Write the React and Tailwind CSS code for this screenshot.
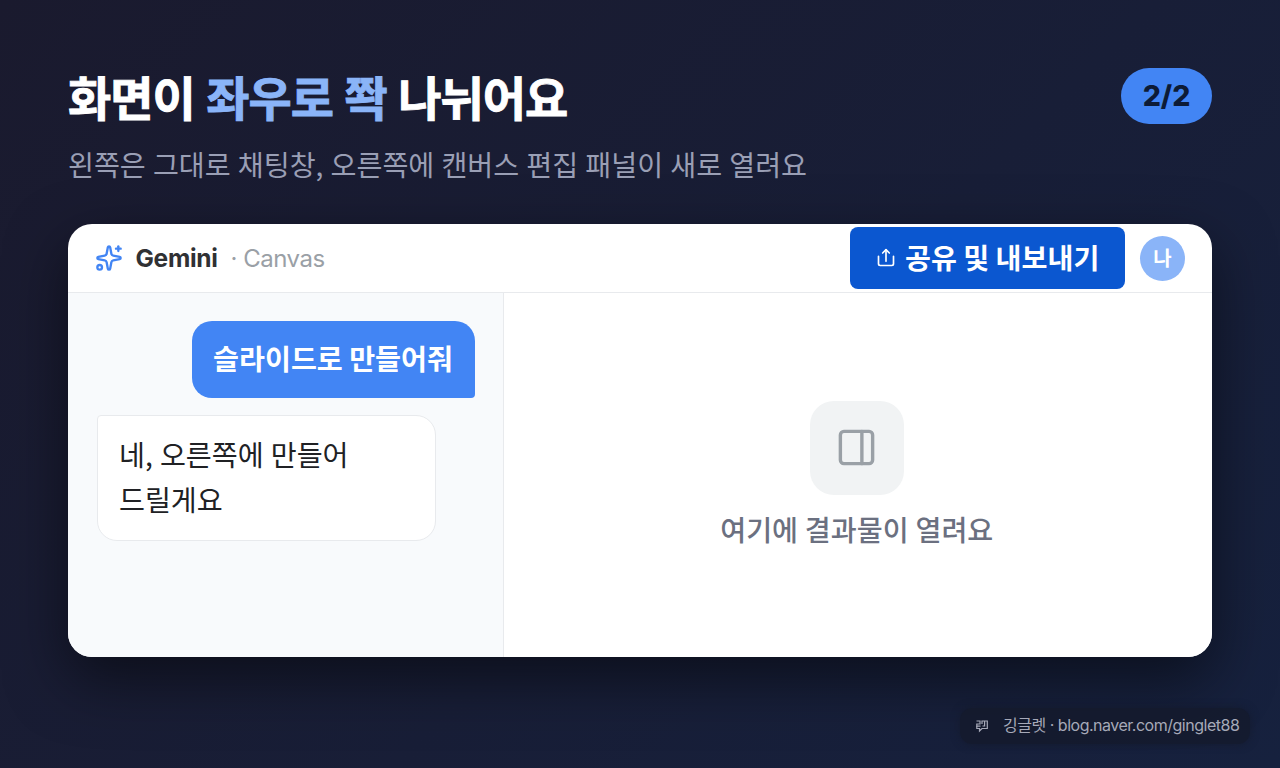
import React from 'react';
import { PanelRight, Sparkles } from 'lucide-react';

function ShareIcon() {
  return (
    <svg className="h-[20px] w-[20px]" viewBox="0 0 24 24" fill="none" stroke="currentColor" strokeWidth="2" strokeLinecap="round" strokeLinejoin="round">
      <path d="M12 2.2V16" />
      <path d="m16 6-4-4-4 4" />
      <path d="M3 10v9a2 2 0 0 0 2 2h14a2 2 0 0 0 2-2v-9" />
    </svg>
  );
}

function BlogMark() {
  return (
    <svg className="h-3.5 w-3.5" viewBox="0 0 14 14" fill="none" stroke="currentColor" strokeWidth="1.2">
      <path d="M7 5V2h5.3v7.5H7L4.5 12V9.5H1.8V7" />
      <path d="M1.5 2H5v3H1.8v2.2H5.5M9.6 2v5H7.5" />
    </svg>
  );
}

function Header() {
  return (
    <div className="flex h-[69px] shrink-0 items-center border-b border-[#e8eaed] pr-[26.5px] pl-[27px]">
      <Sparkles size={28} strokeWidth={2} className="mr-[12.5px] text-[#4285f4]" />
      <span className="pt-px text-[24.5px] font-bold tracking-[-0.3px] text-[#303134]">Gemini</span>
      <span className="ml-[13px] pt-px text-[24px] tracking-[-0.5px] text-[#9aa0a6]">· Canvas</span>
      <div className="ml-auto flex h-[62px] w-[275px] items-center gap-[9px] rounded-lg bg-[#0b57d0] pl-[26px] text-white">
        <ShareIcon />
        <span className="-mt-0.5 whitespace-nowrap font-['Noto_Sans_CJK_KR',sans-serif] text-[28.2px] font-bold">공유 및 내보내기</span>
      </div>
      <div className="ml-[15px] flex h-[45px] w-[45px] items-center justify-center rounded-full bg-[#8ab4f8] font-['Noto_Sans_CJK_KR',sans-serif] text-[20px] font-bold text-white">
        나
      </div>
    </div>
  );
}

function ChatPane() {
  return (
    <div className="flex w-[436px] shrink-0 flex-col gap-[17px] border-r border-[#e8eaed] bg-[#f8fafc] pt-7 pr-7 pl-[29px] text-[28.2px]">
      <div className="flex h-[77px] w-[283px] items-center justify-center self-end rounded-[20px] rounded-br-[4px] bg-[#4285f4] pr-px pb-0.5 font-bold whitespace-nowrap text-white">
        슬라이드로 만들어줘
      </div>
      <div className="h-[126px] w-[339px] rounded-[20px] rounded-tl-[4px] border border-[#e8eaed] bg-white px-[21px] pt-[15px] leading-[45px] text-[#202124] [word-spacing:0.8px]">
        네, 오른쪽에 만들어
        <br />
        드릴게요
      </div>
    </div>
  );
}

function CanvasPane() {
  return (
    <div className="flex flex-1 flex-col items-center bg-white pt-[108px] pr-[2px]">
      <div className="flex h-[94px] w-[94px] items-center justify-center rounded-[24px] bg-[#f1f3f4] pb-px text-[#9aa0a6]">
        <PanelRight size={43} strokeWidth={1.9} />
      </div>
      <p className="mt-[12px] text-[28.2px] leading-[44px] font-medium text-[#6b7080] [word-spacing:0.5px]">여기에 결과물이 열려요</p>
    </div>
  );
}

export default function App() {
  return (
    <div className="flex h-[768px] w-[1280px] flex-col overflow-hidden bg-linear-135 from-[#1a1a2e] to-[#16213e] px-[68px] pt-[68px] font-['Inter','Noto_Sans_CJK_KR',sans-serif]">
      <div className="flex h-[156px] shrink-0 items-start justify-between font-['Noto_Sans_CJK_KR',sans-serif]">
        <div>
          <h1 className="-mt-[3px] text-[47px] leading-[62px] font-bold tracking-[-1.04px] text-white [word-spacing:2px] [-webkit-text-stroke:0.9px]">
            화면이 <span className="text-[#8ab4f8]">좌우로 쫙</span> 나뉘어요
          </h1>
          <p className="mt-[15px] text-[28.2px] leading-[44px] text-[#9a9fb5] [word-spacing:0.8px]">
            왼쪽은 그대로 채팅창, 오른쪽에 캔버스 편집 패널이 새로 열려요
          </p>
        </div>
        <div className="flex h-14 w-[91px] items-center justify-center rounded-full bg-[#4285f4] pt-px font-['Inter',sans-serif] text-[28.5px] font-extrabold text-[#0d1b36]">
          2/2
        </div>
      </div>

      <div className="flex h-[433px] w-[1143.5px] shrink-0 flex-col overflow-hidden rounded-[24px] bg-white shadow-[0_22px_60px_rgba(0,0,0,0.5)]">
        <Header />
        <div className="flex flex-1 font-['Noto_Sans_CJK_KR',sans-serif]">
          <ChatPane />
          <CanvasPane />
        </div>
      </div>

      {/* blog credit */}
      <div className="mt-[51px] -mr-[38px] flex h-9 w-[290px] shrink-0 items-center self-end rounded-[12px] bg-[#141a2b]/75 pl-[15px] text-[#a6a9b8] shadow-[0_0_8px_rgba(20,26,43,0.75)]">
        <BlogMark />
        <span className="ml-[14px] -mt-0.5 text-[16px] tracking-[-0.49px] whitespace-nowrap">깅글렛 · blog.naver.com/ginglet88</span>
      </div>
    </div>
  );
}
